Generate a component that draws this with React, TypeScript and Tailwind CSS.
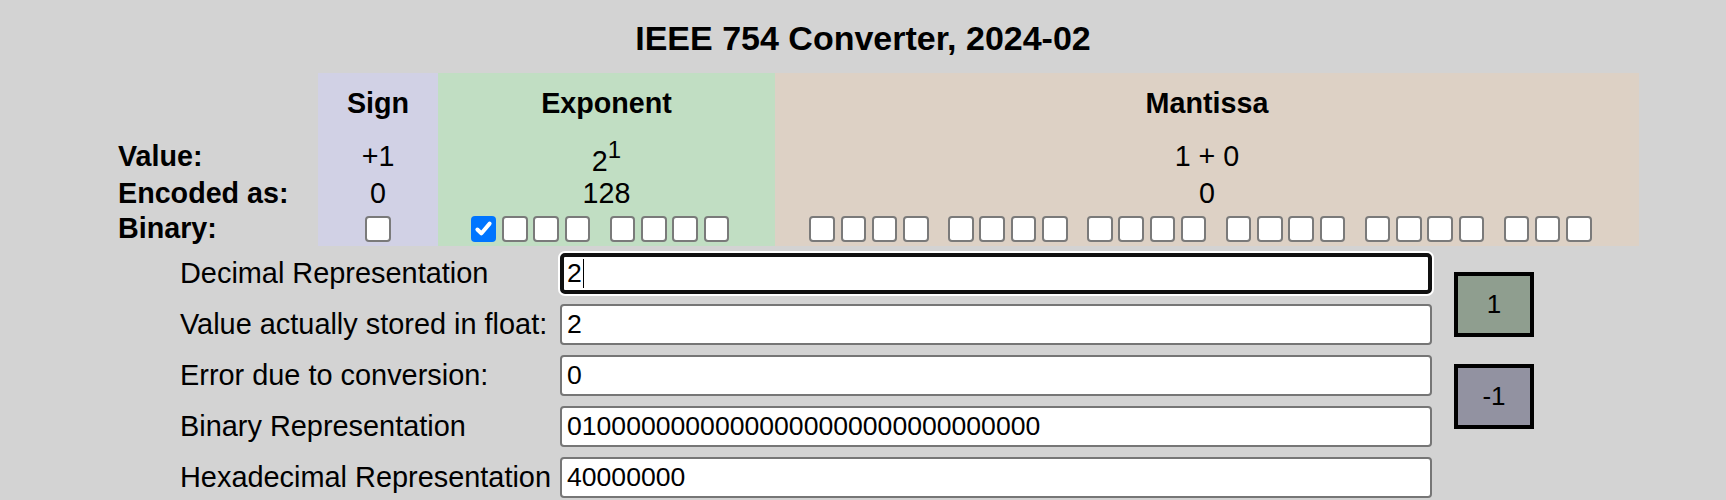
import React from 'react';

const exponentBits = [1, 0, 0, 0, 0, 0, 0, 0];
const mantissaBits = Array.from({ length: 23 }, () => 0);

// split bits into groups of four, like the original page
const groups = (bits: number[]) => {
  const out: number[][] = [];
  for (let i = 0; i < bits.length; i += 4) out.push(bits.slice(i, i + 4));
  return out;
};

const Box: React.FC<{ checked?: boolean }> = ({ checked }) =>
  checked ? (
    <span className="flex h-[26px] w-[25.5px] items-center justify-center rounded-[4px] bg-[#0075ff]">
      <svg viewBox="0 0 26 26" className="h-[26px] w-[26px]">
        <path d="M6.5 13.5 L10.5 17.5 L19 7.5" stroke="white" strokeWidth="4" fill="none" strokeLinecap="round" strokeLinejoin="round" />
      </svg>
    </span>
  ) : (
    <span className="h-[26px] w-[25.5px] rounded-[4px] border-2 border-[#7a7a7a] bg-white" />
  );

const BitRow: React.FC<{ bits: number[] }> = ({ bits }) => (
  <div className="flex items-center gap-[19.5px] pr-[13px]">
    {groups(bits).map((g, i) => (
      <div key={i} className="flex gap-[5.8px]">
        {g.map((b, j) => (
          <Box key={j} checked={b === 1} />
        ))}
      </div>
    ))}
  </div>
);

const fields = [
  { label: 'Decimal Representation', value: '2', focused: true },
  { label: 'Value actually stored in float:', value: '2' },
  { label: 'Error due to conversion:', value: '0' },
  { label: 'Binary Representation', value: '01000000000000000000000000000000' },
  { label: 'Hexadecimal Representation', value: '40000000' },
];

const App: React.FC = () => {
  const sign = 'bg-[#d1d1e5]';
  const expo = 'bg-[#c1dec3]';
  const mant = 'bg-[#ddd1c5]';
  const cell = 'flex items-center justify-center';

  return (
    <div className="min-h-screen w-full bg-[#d3d3d3] font-['Liberation_Sans',Arial,sans-serif] text-black">
      <h1 className="pt-[19px] text-center text-[34px] font-bold leading-[39px]">IEEE 754 Converter, 2024-02</h1>

      {/* bit layout table */}
      <div className="ml-[118px] mt-[15px] grid w-fit grid-cols-[200px_120px_337px_864px] grid-rows-[64px_39px_35px_35px] text-[28.7px] leading-[33px]">
        <div />
        <div className={`${cell} ${sign} pb-[3px] font-bold`}>Sign</div>
        <div className={`${cell} ${expo} pb-[3px] font-bold`}>Exponent</div>
        <div className={`${cell} ${mant} pb-[3px] font-bold`}>Mantissa</div>

        <div className="flex items-center font-bold">Value:</div>
        <div className={`${cell} ${sign}`}>+1</div>
        <div className={`${cell} ${expo}`}>
          <span>
            <span className="relative top-[5.5px]">2</span>
            <span className="relative -top-[7.5px] text-[24px]">1</span>
          </span>
        </div>
        <div className={`${cell} ${mant}`}>1 + 0</div>

        <div className="flex items-center font-bold">Encoded as:</div>
        <div className={`${cell} ${sign}`}>0</div>
        <div className={`${cell} ${expo}`}>128</div>
        <div className={`${cell} ${mant}`}>0</div>

        <div className="flex items-center font-bold">Binary:</div>
        <div className={`${cell} ${sign}`}>
          <Box />
        </div>
        <div className={`${cell} ${expo}`}>
          <BitRow bits={exponentBits} />
        </div>
        <div className={`${cell} ${mant}`}>
          <BitRow bits={mantissaBits} />
        </div>
      </div>

      {/* representations */}
      <div className="mt-[7px] flex">
        <div className="ml-[180px] grid auto-rows-[41px] grid-cols-[380px_872px] gap-y-[10px]">
          {fields.map((f) => (
            <React.Fragment key={f.label}>
              <div className="flex items-center text-[28.9px] leading-[33px]">{f.label}</div>
              <div
                className={
                  f.focused
                    ? 'flex items-center rounded-[5px] border-4 border-[#101010] bg-white pl-[3px] text-[26.6px] shadow-[0_0_0_2px_#ffffff]'
                    : 'flex items-center rounded-[4px] border-2 border-[#767676] bg-white pl-[5px] text-[26.6px]'
                }
              >
                <span>{f.value}</span>
                {f.focused && <span className="ml-[1px] h-[29px] w-[1.5px] bg-black" />}
              </div>
            </React.Fragment>
          ))}
        </div>

        <div className="ml-[22px] flex flex-col gap-[27px] pt-[18.5px]">
          <button className="flex h-[65px] w-[80px] items-center justify-center border-4 border-black bg-[#8f9e8f] text-[26px]">1</button>
          <button className="flex h-[65px] w-[80px] items-center justify-center border-4 border-black bg-[#9292a1] text-[26px]">-1</button>
        </div>
      </div>
    </div>
  );
};

export default App;
